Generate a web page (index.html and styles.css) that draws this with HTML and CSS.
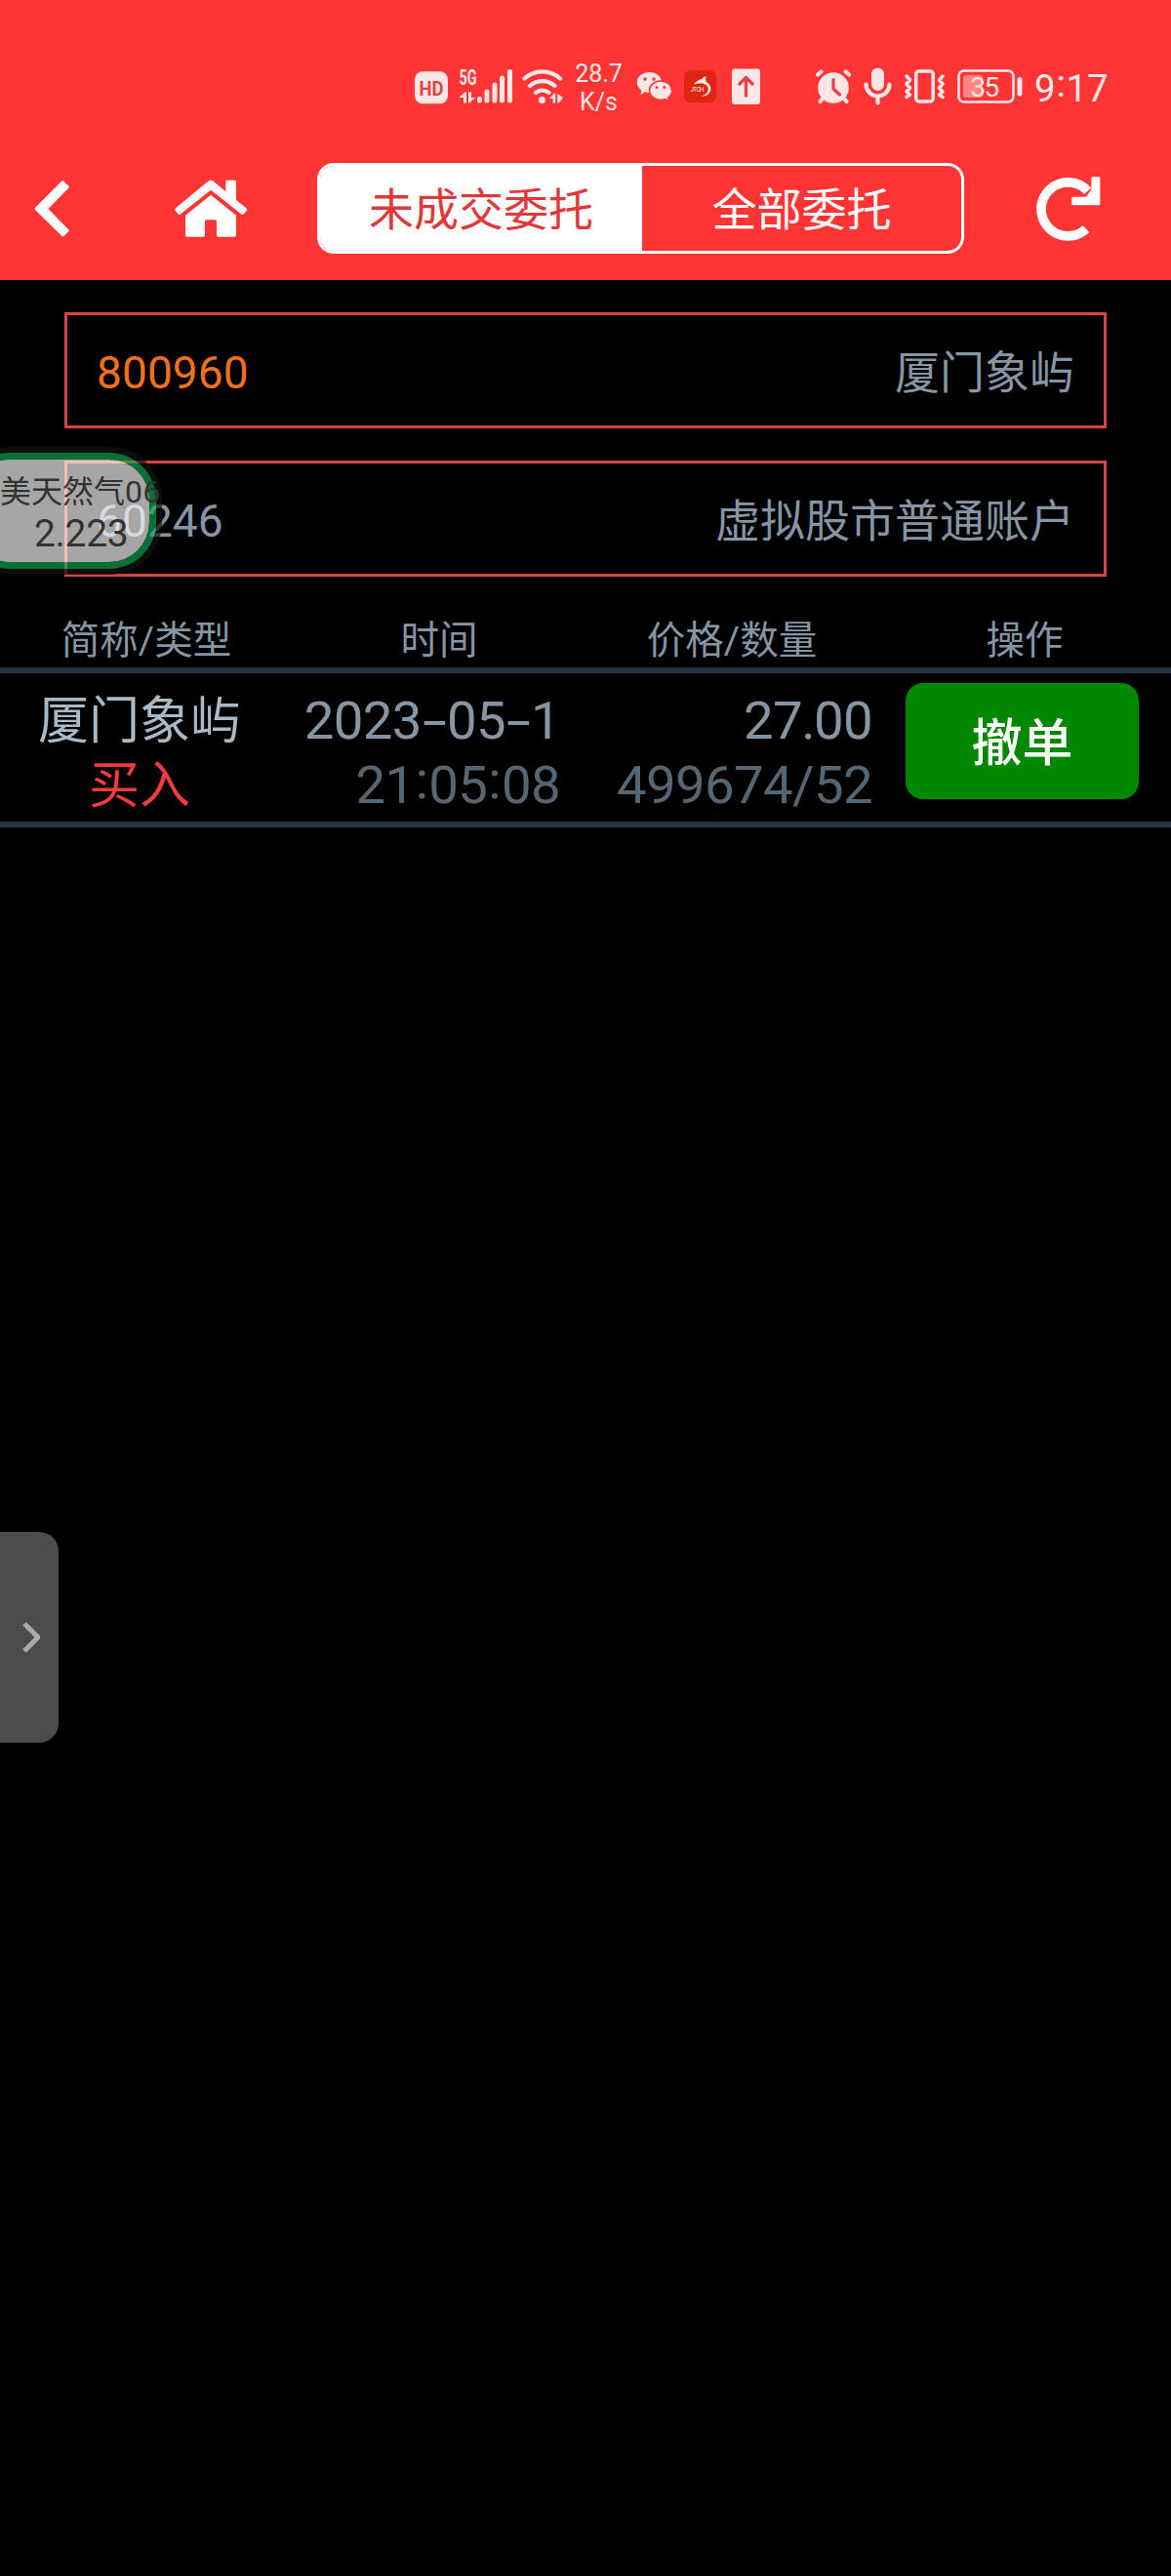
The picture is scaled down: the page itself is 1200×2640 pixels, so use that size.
FILE: index.html
```html
<!DOCTYPE html>
<html lang="zh-CN">
<head>
<meta charset="utf-8">
<title>未成交委托</title>
<link rel="stylesheet" href="styles.css">
</head>
<body>
<header class="header">
  <div class="status">
    <svg class="icon" width="34" height="60" viewBox="425 60 34 60"><rect x="425" y="73.300" width="34" height="33" rx="8"/><text class="hd" x="442" y="98" text-anchor="middle" textLength="25" lengthAdjust="spacingAndGlyphs">HD</text></svg>
    <svg class="icon signal" width="56" height="60" viewBox="470 60 56 60">
      <text class="net" x="470.500" y="87" textLength="18" lengthAdjust="spacingAndGlyphs">5G</text>
      <path d="M470 100l6.500-5.500h1.500v11h-3v-5.500zM480 94.500h3v5.500h4l-6 5.500h-1z"/>
      <path class="line bars" d="M491.500 101.500v1.500M499 94v9M507 87v16M514.500 80v23M522.500 73.500v29.500"/>
    </svg>
    <svg class="icon wifi" width="43" height="60" viewBox="535 60 43 60">
      <path class="line w4" d="M537.500 80.500a27 27 0 0 1 36.500 0M543 88a19 19 0 0 1 25.500 0M549 95a11 11 0 0 1 13.500 0"/>
      <circle cx="555.500" cy="102.500" r="3.500"/>
      <path d="M563 101l5-5.500h1.200v10h-2.500v-4.500zM571.300 96l5.700 4-4.200 5.500h-1.500z"/>
    </svg>
    <div class="speed"><span>28.7</span><span>K/s</span></div>
    <svg class="icon wechat" width="38" height="60" viewBox="652 60 38 60">
      <path d="M665.500 74c7 0 12.500 4.500 12.500 10.500S672.500 95 665.500 95c-1.500 0-3-.2-4.500-.7l-4.500 3 .8-4.800c-2.800-2-4.500-4.800-4.500-8C652.800 78.500 658.500 74 665.500 74z"/>
      <path class="cut" d="M677 83c6.500 0 11.600 4.400 11.600 9.800 0 3-1.500 5.600-3.900 7.400l.5 3.300-3.500-2c-1.500.6-3 .9-4.700.9-6.500 0-11.500-4.200-11.500-9.600S670.500 83 677 83z"/>
      <g class="dots"><circle cx="661" cy="81" r="1.800"/><circle cx="670" cy="81" r="1.800"/><circle cx="673" cy="89.500" r="1.500"/><circle cx="680.800" cy="89.500" r="1.500"/></g>
    </svg>
    <svg class="icon app" width="35" height="60" viewBox="700 60 35 60">
      <rect class="app-bg" x="701" y="72" width="33" height="33" rx="6"/>
      <path d="M711 86.500q3-4.500 8-5.500 2-2.500 4.500-3-1 3 .2 5.800 5 3 4.600 7.700-.5 6.500-10 7.500 7-2.500 7.500-7.500.2-4-5.300-6-5-.5-9.500 1z"/>
      <text class="tiny" x="707.500" y="94" textLength="14">JT CH</text>
    </svg>
    <svg class="icon upload" width="31" height="60" viewBox="749 60 31 60"><rect x="750" y="70.500" width="29" height="36.500" rx="3"/><path class="line arrow" d="M764.500 98V80M758 86l6.500-6.500 6.500 6.500"/></svg>
    <svg class="icon alarm" width="38" height="60" viewBox="835 60 38 60">
      <circle cx="854" cy="90" r="15.800"/>
      <path class="line w4" d="M838 76.500l3.500-3M870 76.500l-3.500-3M843 101l-2.500 3M865 101l2.500 3"/>
      <path class="line hands" d="M854 81.500v9.500l6.500 6"/>
    </svg>
    <svg class="icon mic" width="31" height="60" viewBox="884 60 31 60"><rect x="893" y="69.500" width="13" height="23.500" rx="6.500"/><path class="line w4" d="M887.500 86.500a12 12 0 0 0 24 0M899.500 98.500v7"/></svg>
    <svg class="icon vibrate" width="43" height="60" viewBox="926 60 43 60"><rect class="line w35" x="938.700" y="73" width="17.500" height="31" rx="3"/><path class="line w35" d="M929 78l3.500 4-3.500 4 3.500 4-3.500 4 3.500 3-3.500 2.500M966 78l-3.500 4 3.500 4-3.500 4 3.500 4-3.500 3 3.500 2.500"/></svg>
    <svg class="icon battery" width="69" height="60" viewBox="980 60 69 60">
      <rect class="charge" x="987" y="77" width="20" height="23" rx="3"/>
      <rect class="line w2" x="982.500" y="72.500" width="56" height="32" rx="5.500"/>
      <rect x="1042.500" y="79" width="5" height="19.500" rx="2.500"/>
      <text class="level" x="1009.200" y="98.800" text-anchor="middle" textLength="30">35</text>
    </svg>
    <div class="clock">9<span class="colon">:</span>17</div>
  </div>
  <nav class="nav">
    <svg class="back" width="37" height="60" viewBox="106 100 111 180"><path d="M194 109L113 190l81 80 14-13-66-67 66-67z"/></svg>
    <svg class="home" width="76" height="60" viewBox="534 100 228 180">
      <path d="M639 106q9-7 18 0l37 31v-31q0-4 4-4h24q4 0 4 4v57l31 25q4 4 1 8l-8 10q-3 4-7 1L648 132 554 207q-4 3-7-1l-8-10q-3-4 1-8z"/>
      <path d="M648 147l78 63v60q0 6-6 6h-48q-6 0-6-6v-41q0-5-5-5h-26q-5 0-5 5v41q0 6-6 6h-48q-6 0-6-6v-60z"/>
    </svg>
    <div class="tabs"><div class="tab active">未成交委托</div><div class="tab">全部委托</div></div>
    <svg class="refresh" width="68" height="68" viewBox="242 86 204 204"><path class="ring" d="M398 250A82.500 82.500 0 1 1 403 133"/><path d="M417 90h21q3 0 3 3v81q0 3-3 3h-81q-3 0-3-3v-20q0-3 3-3h41l16-22V93q0-3 3-3z"/></svg>
  </nav>
</header>
<main class="main">
  <section class="fields">
    <div class="field"><span class="code">800960</span><span>厦门象屿</span></div>
    <div class="field"><span class="num">60246</span><span>虚拟股市普通账户</span></div>
  </section>
  <section class="orders">
    <div class="thead"><span>简称/类型</span><span>时间</span><span>价格/数量</span><span>操作</span></div>
    <div class="row">
      <div class="cell name"><span>厦门象屿</span><span class="buy">买入</span></div>
      <div class="cell time"><span class="date">2023<i class="dash">-</i>05<i class="dash">-</i>1</span><span class="sub">21<i class="colon">:</i>05<i class="colon">:</i>08</span></div>
      <div class="cell price"><span>27<i class="dot">.</i>00</span><span class="sub">499674/52</span></div>
      <div class="cancel">撤单</div>
    </div>
  </section>
</main>
<aside class="quote"><span class="quote-name">美天然气<i>06</i></span><span class="quote-value">2.223</span></aside>
<aside class="drawer"><svg width="18" height="34" viewBox="23 1661 18 34"><path d="M25 1664l14 14-14 14"/></svg></aside>
</body>
</html>
```
FILE: styles.css
```css
* { box-sizing: border-box; }
body {
  margin: 0;
  width: 1200px;
  height: 2640px;
  position: relative;
  overflow: hidden;
  background: #000;
  color: #8595a3;
  font-family: Roboto, "Noto Sans CJK SC", sans-serif;
}
i { font-style: normal; }
.header { height: 287px; padding-top: 60px; background: #ff3434; }
.status { display: flex; height: 60px; padding-left: 425px; color: #ffe6e6; }
.icon { flex: none; fill: #ffe6e6; }
.line { fill: none; stroke: #ffe6e6; stroke-linecap: round; stroke-linejoin: round; }
.bars { stroke-width: 5; }
.w4 { stroke-width: 4.200; }
.w35 { stroke-width: 3.500; }
.w2 { stroke-width: 2.600; }
.hd { font: 700 21px Roboto; fill: #e04444; }
.net { font: 700 22px Roboto; }
.signal { margin-left: 11px; }
.wifi { margin-left: 9px; }
.speed { display: flex; flex-direction: column; width: 55px; margin-left: 8px; padding-top: 1px; text-align: center; font-size: 25px; line-height: 29px; }
.wechat { margin-left: 11px; }
.cut { stroke: #ff3434; stroke-width: 1.500; }
.dots { fill: #e84040; }
.app { margin-left: 10px; }
.app-bg { fill: #dd2712; }
.tiny { font: 6.500px Roboto; }
.upload { margin-left: 14px; }
.line.arrow { stroke: #e04444; stroke-width: 3.300; }
.alarm { margin-left: 55px; }
.line.hands { stroke: #e04444; stroke-width: 3.200; }
.mic, .vibrate, .battery, .clock { margin-left: 11px; }
.charge { fill: #ff8585; }
.level { font: 28.500px Roboto; }
.clock { font-size: 38.500px; line-height: 61px; letter-spacing: -.2px; white-space: nowrap; }
.colon { position: relative; top: -5px; padding: 0 1px; }

.nav { display: flex; align-items: center; height: 167px; margin-top: 10px; padding-left: 35px; fill: #fff; }
.back { stroke: #fff; stroke-width: 10; stroke-linejoin: round; }
.home { margin-left: 106px; }
.tabs { display: flex; width: 663px; height: 93px; margin-left: 71px; border: 3px solid #fff; border-radius: 17px; overflow: hidden; }
.tab { flex: 1; color: #fff; font-size: 46px; line-height: 91px; text-align: center; }
.tab.active { flex: none; width: 330px; background: #fff; color: #df3a3a; }
.refresh { margin-left: 73px; }
.ring { fill: none; stroke: #fff; stroke-width: 29; stroke-linejoin: round; }

.fields { display: flex; flex-direction: column; gap: 33px; padding: 33px 66px 0; }
.field { display: flex; justify-content: space-between; height: 119px; padding: 0 30px; border: 3px solid #d64545; font-size: 46px; line-height: 119px; }
.code { color: #ef711c; }
.code, .num { letter-spacing: .1px; font-size: 46px; line-height: 118px; }
.thead { display: flex; height: 99px; border-bottom: 6px solid #243442; font-size: 39.500px; line-height: 131px; }
.thead span { flex: 1; text-align: center; }
.row { display: flex; height: 158px; padding-top: 10px; border-bottom: 6px solid #243442; font-size: 54.500px; }
.cell { display: flex; flex-direction: column; line-height: 66px; text-align: right; padding-top: 5px; letter-spacing: -.6px; white-space: nowrap; }
.name { width: 286px; padding-top: 7px; text-align: center; color: #aab9c6; font-size: 52px; letter-spacing: 0; }
.buy { color: #f03c3c; }
.time { width: 288px; }
.price { width: 320px; }
.dot { margin: 0 -1px; }
.sub { color: #566572; }
.dash { display: inline-block; width: 26px; text-align: center; transform: scaleX(1.650); }
.cancel { width: 239px; height: 119px; margin-left: 34px; border-radius: 18px; background: #008800; color: #fff; font-size: 52px; font-weight: 500; line-height: 125px; text-align: center; }

.quote {
  position: absolute;
  left: -38px;
  top: 464px;
  width: 198px;
  height: 119px;
  padding: 13px 0 0 31px;
  border: 7px solid rgba(18, 170, 84, .65);
  border-radius: 48px;
  background: rgba(255, 255, 255, .65);
  background-clip: padding-box;
  box-shadow: 0 0 0 6px rgba(18, 18, 18, .7);
  color: #333;
  white-space: nowrap;
}
.quote span { display: block; }
.quote-name { font-size: 32px; line-height: 40px; }
.quote-name i { letter-spacing: .3px; }
.quote-value { padding-left: 35px; font-size: 39px; line-height: 46px; letter-spacing: -.3px; }
.drawer { position: absolute; left: 0; top: 1570px; width: 60px; height: 216px; padding: 91px 0 0 23px; border-radius: 0 20px 20px 0; background: #4c4c4c; }
.drawer path { fill: none; stroke: #aaa; stroke-width: 5; }
```
